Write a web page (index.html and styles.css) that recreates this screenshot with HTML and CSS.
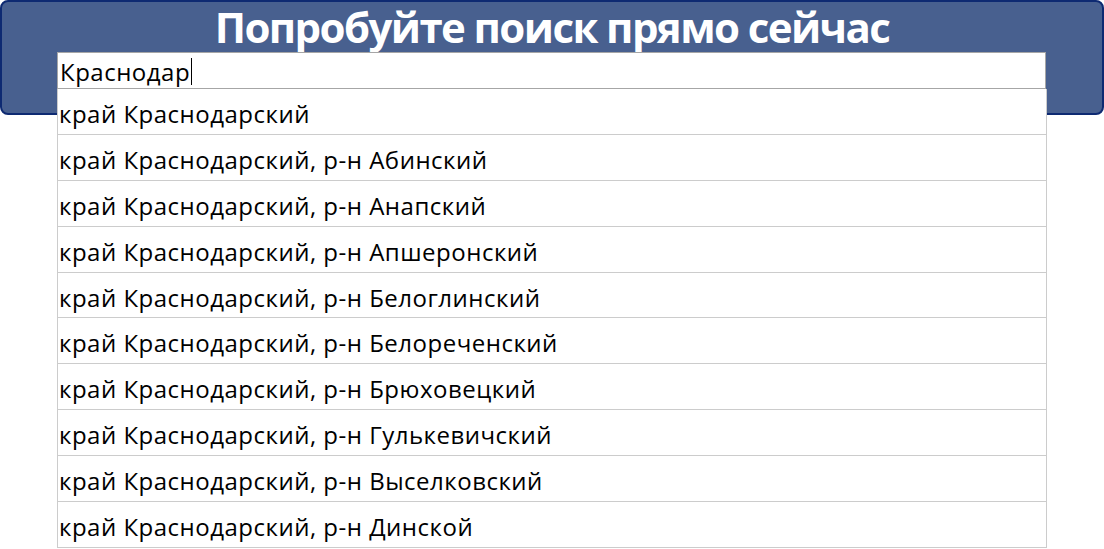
FILE: index.html
```html
<!DOCTYPE html>
<html lang="ru">
<head>
<meta charset="utf-8">
<link rel="stylesheet" href="styles.css">
</head>
<body>
<div class="page">
  <div class="banner">
    <h1 class="title">Попробуйте поиск прямо сейчас</h1>
  </div>
  <div class="search">
    <div class="input"><span class="value">Краснодар</span><span class="caret"></span></div>
    <ul class="list">
      <li>край Краснодарский</li>
      <li>край Краснодарский, р-н Абинский</li>
      <li>край Краснодарский, р-н Анапский</li>
      <li>край Краснодарский, р-н Апшеронский</li>
      <li>край Краснодарский, р-н Белоглинский</li>
      <li>край Краснодарский, р-н Белореченский</li>
      <li>край Краснодарский, р-н Брюховецкий</li>
      <li>край Краснодарский, р-н Гулькевичский</li>
      <li>край Краснодарский, р-н Выселковский</li>
      <li>край Краснодарский, р-н Динской</li>
    </ul>
  </div>
</div>
</body>
</html>
```
FILE: styles.css
```css
html, body {
  margin: 0;
  padding: 0;
  background: #ffffff;
}
.page {
  position: relative;
  width: 1104px;
  height: 549px;
  overflow: hidden;
  font-family: "Open Sans", "Noto Sans", sans-serif;
}
.banner {
  box-sizing: border-box;
  width: 1104px;
  height: 115px;
  background: #48608f;
  border: 2px solid #0e2a72;
  border-radius: 8px;
  display: flex;
  justify-content: center;
}
.title {
  margin: 0;
  color: #ffffff;
  font-size: 42px;
  font-weight: 700;
  line-height: 50px;
  letter-spacing: -1.6px;
}
.search {
  position: absolute;
  left: 57px;
  top: 52px;
  width: 990px;
}
.input {
  box-sizing: border-box;
  width: 989px;
  height: 37px;
  background: #fff;
  border: 1px solid #a6a6a6;
  display: flex;
  align-items: center;
  padding-left: 2px;
  padding-top: 2px;
  font-size: 24px;
  letter-spacing: 0.5px;
  color: #000;
}
.caret {
  display: inline-block;
  width: 1px;
  height: 27px;
  background: #000;
  margin-left: 1px;
}
.list {
  list-style: none;
  margin: 0;
  padding: 0;
  border-left: 1px solid #cccccc;
  border-right: 1px solid #cccccc;
  background: #fff;
}
.list li {
  box-sizing: border-box;
  height: 45.9px;
  border-bottom: 1px solid #cccccc;
  font-size: 24px;
  letter-spacing: 0.5px;
  color: #000;
  padding-left: 1px;
  padding-top: 4px;
  display: flex;
  align-items: center;
}
```
